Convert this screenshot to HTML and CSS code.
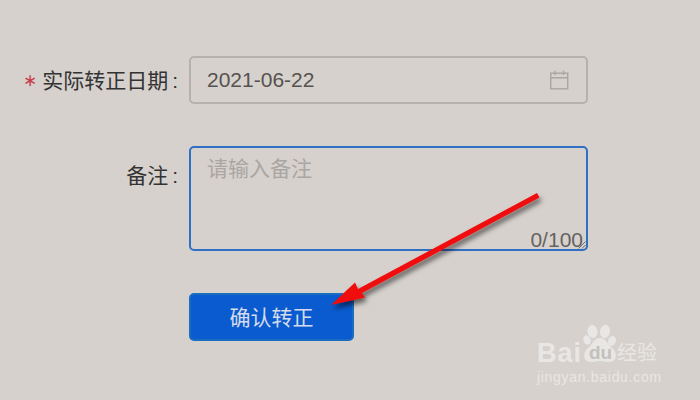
FILE: index.html
```html
<!DOCTYPE html>
<html lang="zh-CN">
<head>
    <meta charset="UTF-8">
    <title>确认转正</title>
    <link rel="stylesheet" href="styles.css">
</head>
<body>
    <form class="form">
        <div class="form-row form-row-date">
            <label class="form-label"><span class="required">∗</span>实际转正日期<span class="colon">:</span></label>
            <div class="date-input">
                <span>2021-06-22</span>
                <svg class="date-icon" width="20" height="20" viewBox="0 0 20 20" fill="none" stroke="#aaa6a2" stroke-width="1.4">
                    <rect x="1.7" y="3.2" width="17" height="15.6"/>
                    <path d="M1.7 7.8H18.7M6 0.8V5M14.5 0.8V5"/>
                </svg>
            </div>
        </div>
        <div class="form-row form-row-note">
            <label class="form-label">备注<span class="colon">:</span></label>
            <div class="note-input">
                <span class="placeholder">请输入备注</span>
                <span class="counter">0/100</span>
                <svg class="resize-grip" width="8" height="8" viewBox="0 0 8 8" stroke="#555" stroke-width="0.8">
                    <path d="M0.5 7.5L7.5 0.5M4 7.5L7.5 4"/>
                </svg>
            </div>
        </div>
        <div class="form-row form-row-submit">
            <button class="submit-btn" type="button">确认转正</button>
        </div>
    </form>

    <!-- annotation arrow -->
    <svg class="arrow" width="700" height="400" viewBox="0 0 700 400">
        <defs>
            <filter id="arrowShadow" x="-20%" y="-20%" width="140%" height="140%">
                <feDropShadow dx="2" dy="4" stdDeviation="2.5" flood-color="#000" flood-opacity="0.55"/>
            </filter>
        </defs>
        <path filter="url(#arrowShadow)" fill="#f00a0a" d="M537 193L539.5 197.5L362 293L365 297.5L331 305L355 282.5L358 289Z"/>
    </svg>

    <!-- watermark -->
    <div class="watermark">
        <span class="wm-bai">Bai</span>
        <svg class="wm-paw" width="38" height="40" viewBox="0 0 38 40" fill="#e9e7e5">
            <ellipse cx="6" cy="16" rx="3.6" ry="4.8" transform="rotate(-20 6 16)"/>
            <ellipse cx="11.5" cy="7.5" rx="5" ry="6.5" transform="rotate(-8 11.5 7.5)"/>
            <ellipse cx="24" cy="7.5" rx="5" ry="6.5" transform="rotate(10 24 7.5)"/>
            <ellipse cx="31" cy="17" rx="3.8" ry="5" transform="rotate(20 31 17)"/>
            <path d="M19 14C25 14 26 20 31 24C37 29 36 38 28 38C24 38 22 37 19 37C16 37 13 38 10 38C2 38 1 29 7 24C12 20 13 14 19 14Z"/>
        </svg>
        <span class="wm-du">du</span>
        <span class="wm-cn">经验</span>
        <span class="wm-url">jingyan.baidu.com</span>
    </div>
</body>
</html>
```

FILE: styles.css
```css
* {
    box-sizing: border-box;
}

body {
    margin: 0;
    width: 700px;
    height: 400px;
    position: relative;
    overflow: hidden;
    background: #d6d1cd;
    color: #333;
    font-family: "Liberation Sans", "Noto Sans CJK SC", sans-serif;
    font-size: 21px;
}

/* Form */
.form {
    padding: 56px 112px 0 0;
}

.form-row {
    display: flex;
    gap: 11px;
}

.form-row-note {
    margin-top: 42px;
}

.form-row-submit {
    margin-top: 42px;
    padding-left: 189px;
}

.form-label {
    width: 178px;
    height: 48px;
    line-height: 49px;
    text-align: right;
    white-space: nowrap;
    flex-shrink: 0;
}

.form-row-note .form-label {
    height: 58px;
    line-height: 59px;
}

.required {
    color: #c8404a;
    font-size: 17px;
    margin-right: 5px;
    vertical-align: 2px;
}

.colon {
    margin-left: 4px;
}

/* Inputs */
.date-input {
    width: 399px;
    height: 48px;
    padding: 0 17px 0 16px;
    border: 2px solid #b5b1ad;
    border-radius: 5px;
    color: #55524f;
    display: flex;
    align-items: center;
    justify-content: space-between;
}

.date-icon {
    flex-shrink: 0;
}

.note-input {
    width: 399px;
    height: 105px;
    padding: 4px 16px;
    border: 2px solid #2f6fc4;
    border-radius: 5px;
    position: relative;
}

.placeholder {
    color: #aaa6a2;
}

.counter {
    position: absolute;
    right: 3px;
    bottom: -3px;
    color: #66635f;
}

.resize-grip {
    position: absolute;
    right: 0;
    bottom: 0;
}

/* Button */
.submit-btn {
    width: 165px;
    height: 48px;
    padding: 0 0 3px;
    border: 2px solid #1a6cc0;
    border-radius: 5px;
    background: #0a5bd0;
    color: #d6dcec;
    font: inherit;
}

/* Arrow */
.arrow {
    position: absolute;
    left: 0;
    top: 0;
}

/* Watermark */
.watermark {
    position: absolute;
    left: 536px;
    top: 323px;
    width: 150px;
    height: 62px;
    color: #e9e7e5;
}

.wm-bai {
    position: absolute;
    left: 1px;
    top: 17px;
    font-size: 27px;
    font-weight: bold;
    letter-spacing: 1px;
    line-height: 27px;
}

.wm-paw {
    position: absolute;
    left: 45px;
    top: 1px;
}

.wm-du {
    position: absolute;
    left: 53px;
    top: 20px;
    color: #c4c0bc;
    font-size: 19px;
    font-weight: bold;
    line-height: 20px;
}

.wm-cn {
    position: absolute;
    left: 81px;
    top: 17px;
    font-size: 20px;
    line-height: 26px;
}

.wm-url {
    position: absolute;
    left: 1px;
    top: 46px;
    font-size: 14px;
    letter-spacing: 0.7px;
    line-height: 16px;
}
```
